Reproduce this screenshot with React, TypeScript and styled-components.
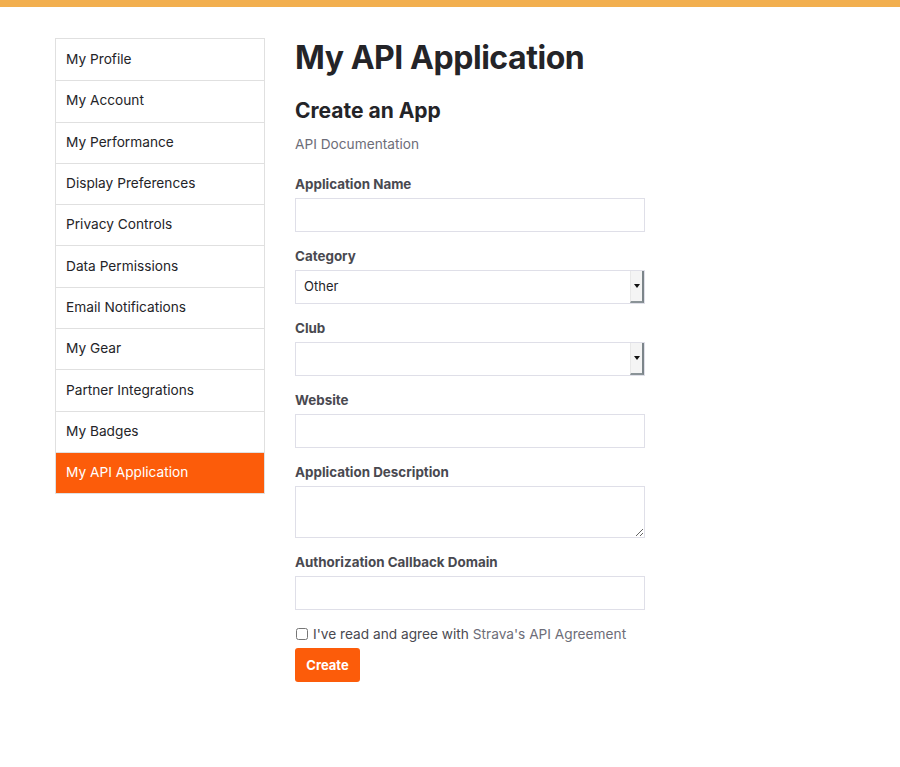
import React from "react";
import styled, { createGlobalStyle } from "styled-components";

const Global = createGlobalStyle`
  html, body { margin: 0; padding: 0; background: #fff; }
  body { font-family: Inter, "Noto Sans", sans-serif; color: #242428; }
  * { box-sizing: border-box; }
`;

const TopBar = styled.div`
  height: 7px;
  background: #f2af4f;
`;

const Page = styled.div`
  display: flex;
  align-items: flex-start;
  gap: 30px;
  padding: 31px 0 0 55px;
`;

const Sidebar = styled.nav`
  width: 210px;
  border: 1px solid #e0e0e0;
  display: flex;
  flex-direction: column;
`;

const NavItem = styled.a<{ $active?: boolean }>`
  display: flex;
  align-items: center;
  height: 41.3px;
  padding: 0 10px 2px;
  font-size: 13.7px;
  color: ${(p) => (p.$active ? "#fff" : "#242428")};
  background: ${(p) => (p.$active ? "#fc5c0a" : "#fff")};
  border-top: 1px solid #e0e0e0;
  text-decoration: none;
  &:first-child { border-top: none; }
`;

const Main = styled.main`
  width: 350px;
  display: flex;
  flex-direction: column;
`;

const Title = styled.h1`
  margin: 0;
  font-size: 32px;
  font-weight: 700;
  line-height: 40px;
  color: #242428;
  letter-spacing: -0.45px;
`;

const Subtitle = styled.h2`
  margin: 20px 0 0;
  font-size: 21px;
  font-weight: 700;
  line-height: 26px;
  color: #242428;
`;

const DocLink = styled.a`
  margin-top: 10px;
  font-size: 13.7px;
  line-height: 20px;
  color: #6d6d78;
  text-decoration: none;
`;

const Field = styled.div<{ $first?: boolean }>`
  display: flex;
  flex-direction: column;
  margin-top: ${(p) => (p.$first ? "21px" : "15px")};
`;

const Label = styled.label`
  font-size: 13.4px;
  font-weight: 700;
  line-height: 18px;
  color: #494950;
  margin-bottom: 5px;
`;

const Input = styled.input`
  width: 350px;
  height: 34px;
  border: 1px solid #dfdfe8;
  border-radius: 0;
  padding: 0 8px;
  font: inherit;
  font-size: 13px;
  outline: none;
`;

const TextArea = styled.textarea`
  display: block;
  width: 350px;
  height: 52px;
  border: 1px solid #dfdfe8;
  border-radius: 0;
  font: inherit;
  outline: none;
  resize: vertical;
`;

const SelectWrap = styled.div`
  position: relative;
  width: 350px;
  height: 34px;
`;

const Select = styled.select`
  appearance: none;
  width: 100%;
  height: 100%;
  border: 1px solid #dfdfe8;
  border-radius: 0;
  background: #fff;
  padding: 0 0 2px 8px;
  font-family: Inter, sans-serif;
  font-size: 13px;
  color: #242428;
  outline: none;
`;

const ArrowBox = styled.span`
  position: absolute;
  top: 1px;
  right: 1px;
  width: 14px;
  height: 32px;
  border-right: 2px solid #7c858a;
  border-bottom: 2px solid #8a9397;
  border-left: 1px solid #e8e8e8;
  background-color: #f4f4f4;
  background-image: radial-gradient(#d6d6d6 0.6px, transparent 0.7px);
  background-size: 2px 2px;
  display: flex;
  align-items: center;
  justify-content: center;
  pointer-events: none;
  &::after {
    content: "";
    border-left: 3.5px solid transparent;
    border-right: 3.5px solid transparent;
    border-top: 4px solid #111;
  }
`;

const CheckRow = styled.label`
  display: flex;
  align-items: center;
  gap: 5px;
  margin-top: 14px;
  font-size: 13.7px;
  line-height: 20px;
  color: #494950;
`;

const Box = styled.input`
  width: 12px;
  height: 12px;
  margin: 0 0 0 1px;
  accent-color: #888;
`;

const AgreementLink = styled.a`
  color: #6d6d78;
  text-decoration: none;
`;

const CreateButton = styled.button`
  margin-top: 4px;
  align-self: flex-start;
  width: 65px;
  height: 34px;
  border: none;
  border-radius: 3px;
  background: #fc5c0a;
  color: #fff;
  font-family: Inter, sans-serif;
  font-size: 13px;
  font-weight: 700;
  cursor: pointer;
`;

const navItems = [
  "My Profile",
  "My Account",
  "My Performance",
  "Display Preferences",
  "Privacy Controls",
  "Data Permissions",
  "Email Notifications",
  "My Gear",
  "Partner Integrations",
  "My Badges",
  "My API Application",
];

export default function App() {
  return (
    <>
      <Global />
      <TopBar />
      <Page>
        <Sidebar>
          {navItems.map((n) => (
            <NavItem key={n} $active={n === "My API Application"}>
              {n}
            </NavItem>
          ))}
        </Sidebar>
        <Main>
          <Title>My API Application</Title>
          <Subtitle>Create an App</Subtitle>
          <DocLink>API Documentation</DocLink>
          <Field $first>
            <Label>Application Name</Label>
            <Input />
          </Field>
          <Field>
            <Label>Category</Label>
            <SelectWrap>
              <Select defaultValue="Other">
                <option>Other</option>
              </Select>
              <ArrowBox />
            </SelectWrap>
          </Field>
          <Field>
            <Label>Club</Label>
            <SelectWrap>
              <Select defaultValue="">
                <option value=""></option>
              </Select>
              <ArrowBox />
            </SelectWrap>
          </Field>
          <Field>
            <Label>Website</Label>
            <Input />
          </Field>
          <Field>
            <Label>Application Description</Label>
            <TextArea />
          </Field>
          <Field>
            <Label>Authorization Callback Domain</Label>
            <Input />
          </Field>
          <CheckRow>
            <Box type="checkbox" />
            <span>
              I've read and agree with <AgreementLink>Strava's API Agreement</AgreementLink>
            </span>
          </CheckRow>
          <CreateButton>Create</CreateButton>
        </Main>
      </Page>
    </>
  );
}
